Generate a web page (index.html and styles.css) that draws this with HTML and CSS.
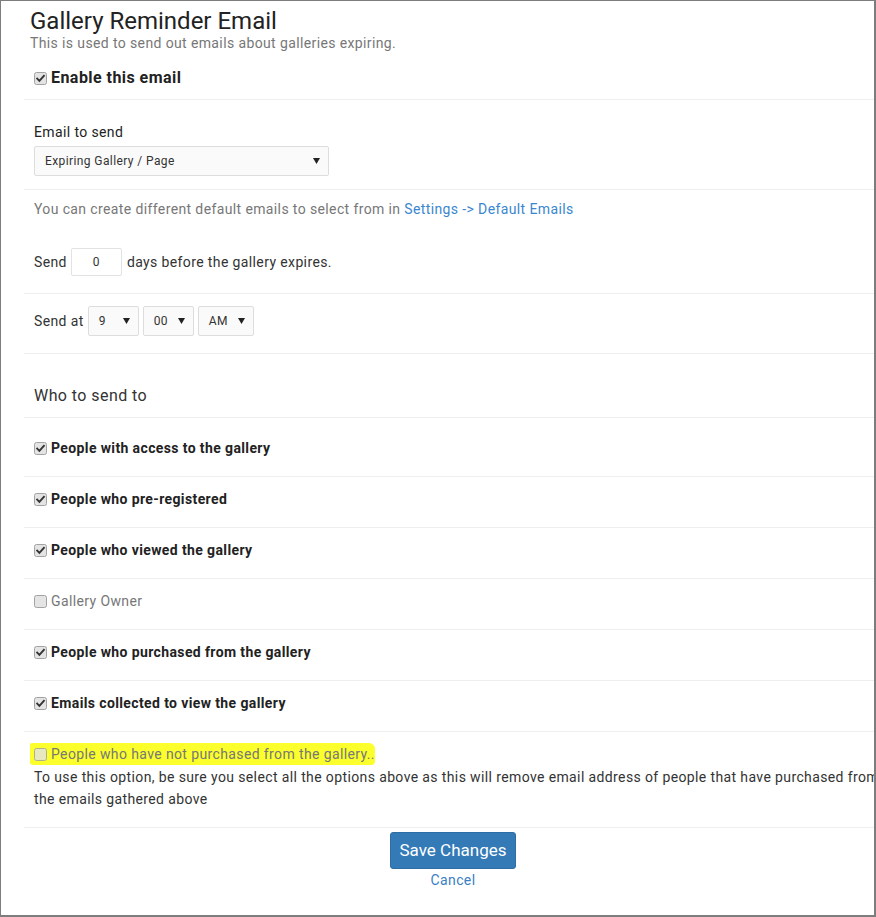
FILE: index.html
```html
<!DOCTYPE html>
<html lang="en">
<head>
<meta charset="utf-8">
<title>Gallery Reminder Email</title>
<link rel="stylesheet" href="styles.css">
</head>
<body>
<div class="frame">
  <header class="head">
    <h1 class="title">Gallery Reminder Email</h1>
    <p class="sub">This is used to send out emails about galleries expiring.</p>
  </header>

  <div class="panel">
    <div class="row row-enable">
      <label class="check big">
        <svg class="cb" width="13" height="13" viewBox="0 0 13 13"><rect x="0.5" y="0.5" width="12" height="12" rx="2" class="cb-box"/><path d="M3.2 6.6 L5.4 8.9 L9.9 3.9" class="cb-tick"/></svg>
        <span>Enable this email</span>
      </label>
    </div>

    <div class="row row-email">
      <div class="lbl">Email to send</div>
      <div class="select select-wide"><span>Expiring Gallery / Page</span><svg class="arrow" width="7" height="6" viewBox="0 0 7 6"><polygon points="0,0 7,0 3.5,6"/></svg></div>
    </div>

    <div class="row row-hint plain">
      <p class="hint">You can create different default emails to select from in <a href="#" class="link">Settings -&gt; Default Emails</a></p>
    </div>

    <div class="row row-send">
      <div class="inline">
        <span>Send</span>
        <span class="num">0</span>
        <span>days before the gallery expires.</span>
      </div>
    </div>

    <div class="row row-sendat">
      <div class="inline">
        <span>Send at</span>
        <div class="selects">
          <div class="select select-sm"><span>9</span><svg class="arrow" width="7" height="6" viewBox="0 0 7 6"><polygon points="0,0 7,0 3.5,6"/></svg></div>
          <div class="select select-sm"><span>00</span><svg class="arrow" width="7" height="6" viewBox="0 0 7 6"><polygon points="0,0 7,0 3.5,6"/></svg></div>
          <div class="select select-md"><span>AM</span><svg class="arrow" width="7" height="6" viewBox="0 0 7 6"><polygon points="0,0 7,0 3.5,6"/></svg></div>
        </div>
      </div>
    </div>

    <div class="row row-who">
      <h2 class="who">Who to send to</h2>
    </div>

    <div class="row row-check first">
      <label class="check">
        <svg class="cb" width="13" height="13" viewBox="0 0 13 13"><rect x="0.5" y="0.5" width="12" height="12" rx="2" class="cb-box"/><path d="M3.2 6.6 L5.4 8.9 L9.9 3.9" class="cb-tick"/></svg>
        <span>People with access to the gallery</span>
      </label>
    </div>
    <div class="row row-check">
      <label class="check">
        <svg class="cb" width="13" height="13" viewBox="0 0 13 13"><rect x="0.5" y="0.5" width="12" height="12" rx="2" class="cb-box"/><path d="M3.2 6.6 L5.4 8.9 L9.9 3.9" class="cb-tick"/></svg>
        <span>People who pre-registered</span>
      </label>
    </div>
    <div class="row row-check">
      <label class="check">
        <svg class="cb" width="13" height="13" viewBox="0 0 13 13"><rect x="0.5" y="0.5" width="12" height="12" rx="2" class="cb-box"/><path d="M3.2 6.6 L5.4 8.9 L9.9 3.9" class="cb-tick"/></svg>
        <span>People who viewed the gallery</span>
      </label>
    </div>
    <div class="row row-check">
      <label class="check off">
        <svg class="cb" width="13" height="13" viewBox="0 0 13 13"><rect x="0.5" y="0.5" width="12" height="12" rx="2" class="cb-box"/></svg>
        <span>Gallery Owner</span>
      </label>
    </div>
    <div class="row row-check">
      <label class="check">
        <svg class="cb" width="13" height="13" viewBox="0 0 13 13"><rect x="0.5" y="0.5" width="12" height="12" rx="2" class="cb-box"/><path d="M3.2 6.6 L5.4 8.9 L9.9 3.9" class="cb-tick"/></svg>
        <span>People who purchased from the gallery</span>
      </label>
    </div>
    <div class="row row-check">
      <label class="check">
        <svg class="cb" width="13" height="13" viewBox="0 0 13 13"><rect x="0.5" y="0.5" width="12" height="12" rx="2" class="cb-box"/><path d="M3.2 6.6 L5.4 8.9 L9.9 3.9" class="cb-tick"/></svg>
        <span>Emails collected to view the gallery</span>
      </label>
    </div>
    <div class="row row-check last">
      <label class="check off marked">
        <svg class="cb" width="13" height="13" viewBox="0 0 13 13"><rect x="0.5" y="0.5" width="12" height="12" rx="2" class="cb-box"/></svg>
        <span>People who have not purchased from the gallery..</span>
      </label>
      <p class="note">To use this option, be sure you select all the options above as this will remove email address of people that have purchased from the emails gathered above</p>
    </div>

    <div class="actions">
      <button type="button" class="btn">Save Changes</button>
      <a href="#" class="cancel">Cancel</a>
    </div>
  </div>
</div>
</body>
</html>
```

FILE: styles.css
```css
* { box-sizing: border-box; }

html, body {
  margin: 0;
  padding: 0;
  background: #ffffff;
}

body {
  font-family: Roboto, "Liberation Sans", Arial, sans-serif;
  font-size: 14px;
  line-height: 20px;
  letter-spacing: 0.38px;
  color: #333333;
}

.frame {
  width: 876px;
  height: 917px;
  border-style: solid;
  border-color: #7d7d7d;
  border-width: 1px 2px 2px 1px;
  overflow: hidden;
  background: #ffffff;
}

.head {
  padding: 7px 0 0 29px;
}

.title {
  margin: 0;
  font-size: 24px;
  line-height: 26px;
  font-weight: 400;
  letter-spacing: 0;
  color: #222222;
}

.sub {
  margin: -1px 0 0;
  font-size: 14px;
  line-height: 20px;
  color: #777777;
}

.panel {
  margin-left: 23px;
  width: 858px;
}

.row {
  padding: 0 10px;
  border-bottom: 1px solid #eeeeee;
}

.row.plain { border-bottom: 0; }

.row-enable { padding-top: 14px; padding-bottom: 10px; }
.row-email { padding-top: 22px; padding-bottom: 13px; }
.row-hint { padding-top: 9px; }
.row-send { padding-top: 29px; padding-bottom: 17px; }
.row-sendat { padding-top: 12px; padding-bottom: 17px; }
.row-who { padding-top: 31px; padding-bottom: 10px; }
.row-check { padding-top: 12px; padding-bottom: 18px; }
.row-check.first { padding-top: 20px; }
.row-check.last { padding-bottom: 17px; }

.check {
  display: flex;
  width: fit-content;
  align-items: center;
  gap: 4px;
  font-weight: 700;
  color: #222222;
  line-height: 20px;
}

.check.big {
  font-size: 16px;
  line-height: 22px;
  letter-spacing: 0.45px;
}

.check.off {
  font-weight: 400;
  color: #777777;
}

.cb { flex: none; display: block; }
.cb-box { fill: #e4e4e4; stroke: #a2a2a2; stroke-width: 1; }
.cb-tick { fill: none; stroke: #333333; stroke-width: 1.9; stroke-linecap: square; }

.marked {
  background: #fbff2b;
  margin-left: -4px;
  padding: 1px 0 1px 4px;
  margin-top: -1px;
  margin-bottom: -1px;
  color: #8a8a5a;
  border-radius: 2px 6px 4px 3px;
}
.marked .cb-box { fill: #e8e8c0; stroke: #b0b08a; }

.lbl {
  color: #222222;
  margin-bottom: 4px;
}

.select {
  display: flex;
  align-items: center;
  justify-content: space-between;
  height: 30px;
  border: 1px solid #dddddd;
  border-radius: 2px;
  background: #fafafa;
  font-size: 12px;
  letter-spacing: 0.4px;
  color: #333333;
  padding: 0 8px 0 10px;
}

.select-wide { width: 295px; }
.select-sm { width: 51px; }
.select-md { width: 56px; }

.arrow { display: block; flex: none; fill: #222222; }

.hint {
  margin: 0;
  color: #777777;
}

.link {
  color: #3a87cf;
  text-decoration: none;
}

.inline {
  display: flex;
  align-items: center;
  gap: 4px;
  color: #333333;
}

.num {
  width: 51px;
  height: 28px;
  border: 1px solid #e2e2e2;
  border-radius: 2px;
  display: flex;
  align-items: center;
  justify-content: center;
  font-size: 12px;
  margin-right: 1px;
}

.selects {
  display: flex;
  gap: 4px;
}

.who {
  margin: 0;
  font-size: 16px;
  line-height: 22px;
  font-weight: 400;
  letter-spacing: 0.43px;
  color: #333333;
}

.note {
  margin: 2px -14px 0 0;
  line-height: 22px;
  color: #333333;
}

.actions {
  display: flex;
  flex-direction: column;
  align-items: center;
  padding-top: 4px;
}

.btn {
  font-family: Roboto, "Liberation Sans", Arial, sans-serif;
  font-size: 17px;
  line-height: 23px;
  letter-spacing: 0;
  padding: 6px 9px;
  color: #ffffff;
  background: #337ab7;
  border: 1px solid #2e6da4;
  border-radius: 3px;
}

.cancel {
  color: #3a80c2;
  text-decoration: none;
  line-height: 20px;
  margin-top: 1px;
}
```
